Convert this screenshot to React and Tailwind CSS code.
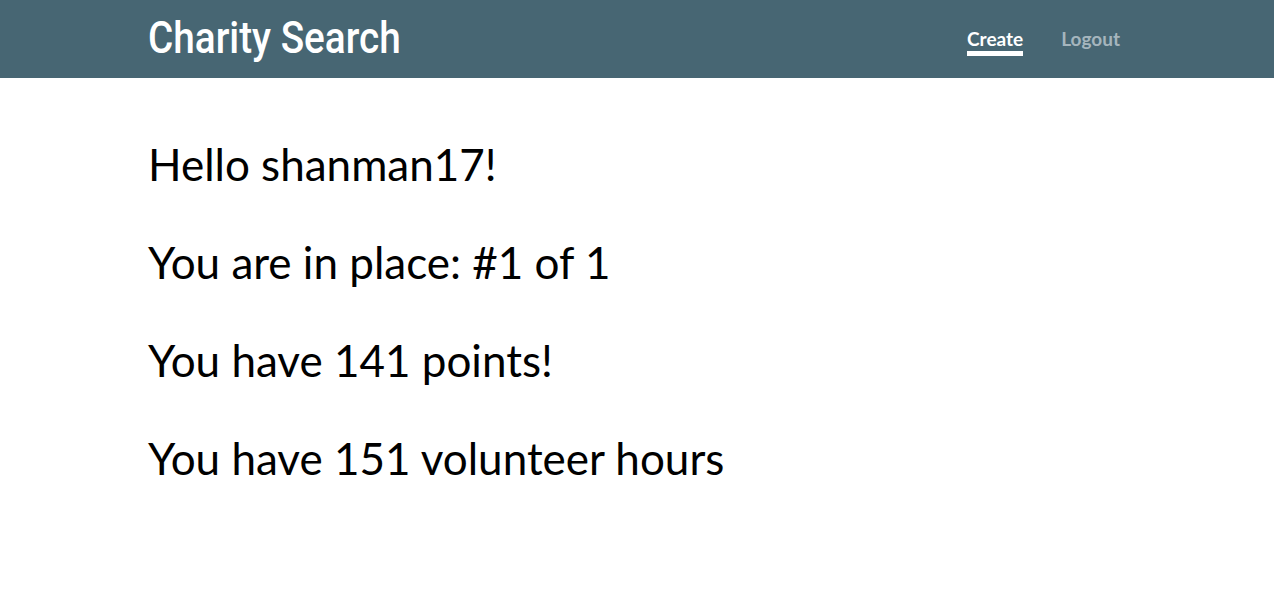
export default function App() {
  const lines = [
    "Hello shanman17!",
    "You are in place: #1 of 1",
    "You have 141 points!",
    "You have 151 volunteer hours",
  ];
  return (
    <div className="min-h-[611px] bg-white font-['Lato',sans-serif]">
      <nav className="h-[78px] bg-[#476673]">
        <div className="flex h-full items-center justify-between pl-[148px] pr-[154px]">
          <div className="font-['Roboto',sans-serif] font-medium text-[45px] leading-none text-white origin-left scale-x-[0.86] whitespace-nowrap -mt-[3px]">
            Charity Search
          </div>
          <div className="flex items-center gap-[38px] text-[19px] font-bold">
            <span className="relative text-white">
              Create
              <span className="absolute left-0 right-0 top-[26px] h-[5px] bg-white" />
            </span>
            <span className="text-[#a5b5bd]">Logout</span>
          </div>
        </div>
      </nav>
      <div className="pl-[148px] pt-[61px] text-[44px] leading-[50px] text-black">
        {lines.map((l) => (
          <div key={l} className="mb-[48px]">{l}</div>
        ))}
      </div>
    </div>
  );
}
